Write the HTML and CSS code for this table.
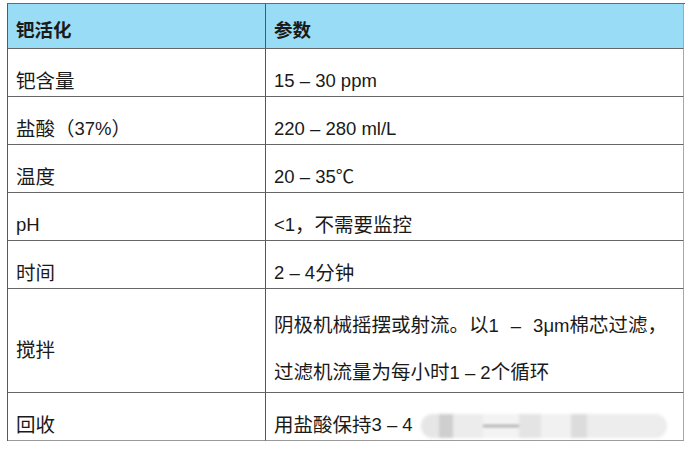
FILE: index.html
```html
<!DOCTYPE html>
<html lang="zh">
<head>
<meta charset="utf-8">
<title>钯活化</title>
<link rel="stylesheet" href="styles.css">
</head>
<body>
<div class="table">
  <div class="cell head">钯活化</div>
  <div class="cell head last">参数</div>

  <div class="cell"><span class="zh">钯含量</span></div>
  <div class="cell last">15 – 30 ppm</div>

  <div class="cell"><span class="zh">盐酸（</span>37%<span class="zh">）</span></div>
  <div class="cell last">220 – 280 ml/L</div>

  <div class="cell"><span class="zh">温度</span></div>
  <div class="cell last">20 – 35℃</div>

  <div class="cell">pH</div>
  <div class="cell last">&lt;1<span class="zh">，不需要监控</span></div>

  <div class="cell"><span class="zh">时间</span></div>
  <div class="cell last">2 – 4<span class="zh">分钟</span></div>

  <div class="cell tall label-mid"><span class="zh">搅拌</span></div>
  <div class="cell tall last multi">
    <div class="line"><span class="zh">阴极机械摇摆或射流。以</span>1<span class="wide">–</span>3μm<span class="zh">棉芯过滤，</span></div>
    <div class="line"><span class="zh">过滤机流量为每小时</span>1 – 2<span class="zh">个循环</span></div>
  </div>

  <div class="cell bottom"><span class="zh">回收</span></div>
  <div class="cell bottom last"><span class="zh">用盐酸保持</span>3 – 4<span class="blur"><span class="b1"></span><span class="b2"></span><span class="b3"></span><span class="b4"></span><span class="b5"></span><span class="b6"></span><span class="b7"></span><span class="b8"></span></span></div>
</div>
</body>
</html>
```

FILE: styles.css
```css
html, body {
  margin: 0;
  background: #ffffff;
}
body {
  padding: 3px 0 0 7px;
  font-family: "Liberation Sans", "Noto Sans CJK SC", sans-serif;
  font-size: 18.5px;
  color: #1a1a1a;
}
.table {
  display: grid;
  grid-template-columns: 258px 418px;
  grid-template-rows: 45px repeat(5, 48px) 104px 48px;
  width: 677px;
  border-top: 1px solid #6a6a6a;
  border-left: 1px solid #5a5a5a;
}
.cell {
  box-sizing: border-box;
  border-right: 1px solid #555;
  border-bottom: 1px solid #666;
  padding: 0 0 4px 8px;
  line-height: 22px;
  display: flex;
  align-items: flex-end;
  white-space: nowrap;
}
.cell.last {
  border-right-color: #a8a8a8;
}
.zh {
  font-size: 19.5px;
}
.head {
  background: #98dcf5;
  font-weight: bold;
  padding-bottom: 6px;
}
.bottom {
  border-bottom-color: #9a9a9a;
}
.label-mid {
  padding-bottom: 31px;
}
.multi {
  flex-direction: column;
  align-items: flex-start;
  justify-content: flex-end;
  gap: 24px;
  padding-bottom: 8px;
}
.wide {
  padding: 0 12px;
}
.blur {
  display: inline-flex;
  width: 246px;
  height: 24px;
  margin-left: 8px;
  margin-bottom: -2px;
  border-radius: 12px;
  overflow: hidden;
  filter: blur(1.4px);
  background: #efefef;
}
.blur span {
  height: 100%;
}
.b1 { width: 18px; background: #e6e6e6; }
.b2 { width: 14px; background: #cfcfcf; }
.b3 { width: 30px; background: #ececec; }
.b4 { width: 36px; box-sizing: border-box; border-top: 11px solid #f3f3f3; border-bottom: 11px solid #f3f3f3; background-color: #9a9a9a; }
.b5 { width: 22px; background: #e4e4e4; }
.b6 { width: 30px; background: #f1f1f1; }
.b7 { width: 16px; background: #dcdcdc; }
.b8 { width: 80px; background: #ededed; }
```
